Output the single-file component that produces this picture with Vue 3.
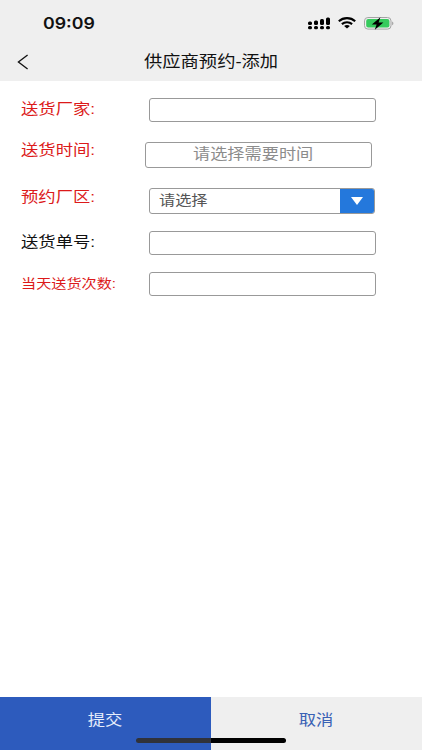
<template>
  <div class="page">
    <header class="top">
      <div class="status-bar">
        <span class="clock">09:09</span>
        <div class="status-icons">
          <svg class="signal" width="22" height="13" viewBox="0 0 22 13">
            <g fill="#000">
              <rect x="0" y="4.4" width="4" height="3.6" rx="1.5" />
              <rect x="6" y="3.6" width="4" height="4.4" rx="1.5" />
              <rect x="12" y="2" width="4" height="6" rx="1.5" />
              <rect x="18" y="0.5" width="4" height="7.5" rx="1.5" />
              <rect v-for="x in [0, 6, 12, 18]" :key="x" :x="x" y="9" width="4" height="3.3" rx="1.5" />
            </g>
          </svg>
          <svg class="wifi" width="18" height="12" viewBox="0 0 18 12">
            <g fill="none" stroke="#000" stroke-width="2.1">
              <path d="M0.8 4.2C5.4 0.1 12.6 0.1 17.2 4.2" />
              <path d="M3.9 7.1C6.8 4.6 11.2 4.6 14.1 7.1" />
            </g>
            <path d="M6.1 9C7.8 7.7 10.2 7.7 11.9 9L9 11.6Z" fill="#000" />
          </svg>
          <svg class="battery" width="30" height="13" viewBox="0 0 30 13">
            <rect x="0.5" y="0.5" width="26.5" height="11.6" rx="3.4" fill="none" stroke="#a4a4a4" />
            <rect x="2.2" y="2" width="23.2" height="8.6" rx="2" fill="#36cb5d" />
            <path d="M28.2 4.4C29.8 5 29.8 7.6 28.2 8.2Z" fill="#9b9b9b" />
            <path
              d="M16.4 0.2L7.8 7.4H12.6L10.8 12.8L19.4 5.4H14.6Z"
              fill="#000"
            />
          </svg>
        </div>
      </div>
      <div class="nav">
        <svg class="back" width="12" height="16" viewBox="0 0 12 16" @click="goBack">
          <path d="M10.6 0.9L1.4 8L10.6 15.1" fill="none" stroke="#111" stroke-width="1.3" />
        </svg>
        <h1 class="title"><span class="wide">供应商预约-添加</span></h1>
      </div>
    </header>

    <main class="form">
      <div class="row">
        <label class="label required"><span class="wide">送货厂家:</span></label>
        <input v-model="form.factory" class="field" type="text" />
      </div>
      <div class="row row-time">
        <label class="label required"><span class="wide">送货时间:</span></label>
        <div class="field time"><span class="wide">{{ form.time || '请选择需要时间' }}</span></div>
      </div>
      <div class="row row-area">
        <label class="label required"><span class="wide">预约厂区:</span></label>
        <div class="field select">
          <span class="value"><span class="wide">{{ form.area || '请选择' }}</span></span>
          <span class="toggle"><i class="triangle"></i></span>
        </div>
      </div>
      <div class="row row-order">
        <label class="label"><span class="wide">送货单号:</span></label>
        <input v-model="form.order" class="field" type="text" />
      </div>
      <div class="row row-count">
        <label class="label required small"><span class="wide">当天送货次数:</span></label>
        <input v-model="form.count" class="field" type="text" />
      </div>
    </main>

    <footer class="actions">
      <button class="btn submit"><span class="wide">提交</span></button>
      <button class="btn cancel" @click="goBack"><span class="wide">取消</span></button>
      <div class="home-bar"></div>
    </footer>
  </div>
</template>

<script setup>
import { reactive } from 'vue'

const form = reactive({
  factory: '',
  time: '',
  area: '',
  order: '',
  count: '',
})

function goBack() {
  window.history.back()
}
</script>

<style>
body {
  margin: 0;
  background: #fff;
}
</style>

<style scoped>
.page {
  display: flex;
  flex-direction: column;
  height: 750px;
  background: #fff;
  font-family: 'Liberation Sans', 'Noto Sans CJK SC', sans-serif;
  color: #111;
  overflow: hidden;
}

.wide {
  display: inline-block;
  transform: scaleX(1.155);
  transform-origin: left center;
  white-space: nowrap;
}

.top {
  height: 81px;
  background: #efefef;
}

.status-bar {
  display: flex;
  justify-content: space-between;
  align-items: center;
  height: 46px;
  padding: 0 28px 0 43px;
  box-sizing: border-box;
}

.clock {
  font-family: Inter, 'Liberation Sans', sans-serif;
  font-size: 16px;
  font-weight: 600;
  line-height: 20px;
  transform: scaleX(1.11);
  transform-origin: left center;
}

.status-icons {
  display: flex;
  align-items: center;
}

.wifi {
  margin-left: 8px;
}

.battery {
  margin-left: 8px;
}

.nav {
  display: flex;
  align-items: center;
  height: 31px;
  padding-left: 17px;
}

.title {
  margin: 0 0 0 115px;
  font-size: 16px;
  font-weight: 400;
  line-height: 24px;
}

.title .wide {
  transform: scaleX(1.143);
}

.form {
  flex: 1;
  padding: 17px 0 0 21px;
}

.row {
  display: flex;
  align-items: center;
  height: 24px;
}

.row-time {
  height: 26px;
  margin-top: 20px;
}

.row-area {
  height: 26px;
  margin-top: 20px;
}

.row-order {
  margin-top: 17px;
}

.row-count {
  margin-top: 17px;
}

.label {
  width: 128px;
  margin-bottom: 2px;
  font-size: 15px;
  line-height: 16px;
}

.row-time .label {
  width: 124px;
  margin-bottom: 10px;
}

.row-area .label {
  margin-bottom: 9px;
}

.label.required {
  color: #dc1a1a;
}

.label.small {
  font-size: 13px;
  margin-bottom: 0;
}

.label.small .wide {
  transform: scaleX(1.165);
}

.field {
  box-sizing: border-box;
  width: 227px;
  height: 24px;
  padding: 0 8px;
  border: 1px solid #999;
  border-radius: 3px;
  background: #fff;
  outline: none;
}

.time {
  height: 26px;
  padding: 0 0 0 47px;
  font-size: 15px;
  line-height: 22px;
  color: #8c8c8c;
}

.time .wide {
  transform: scaleX(1.145);
}

.select {
  display: flex;
  width: 226px;
  height: 26px;
  padding: 0;
  overflow: hidden;
}

.value {
  flex: 1;
  padding-left: 9px;
  font-size: 14px;
  line-height: 22px;
  color: #555;
}

.toggle {
  display: flex;
  justify-content: center;
  align-items: center;
  width: 34px;
  background: #2478dc;
}

.triangle {
  border-left: 6.5px solid transparent;
  border-right: 6.5px solid transparent;
  border-top: 8px solid #fff;
}

.actions {
  position: relative;
  display: flex;
  height: 53px;
}

.btn {
  flex: 1;
  padding: 0 0 8px;
  border: none;
  font-family: inherit;
  font-size: 15px;
  line-height: 20px;
}

.btn .wide {
  transform-origin: center;
}

.submit {
  background: #2d5bbd;
  color: #e6edfb;
}

.cancel {
  background: #efefef;
  color: #3a62b5;
}

.home-bar {
  position: absolute;
  left: 136px;
  bottom: 7px;
  width: 150px;
  height: 5px;
  border-radius: 3px;
  background: linear-gradient(90deg, #30323a 50%, #000 50%);
}
</style>
